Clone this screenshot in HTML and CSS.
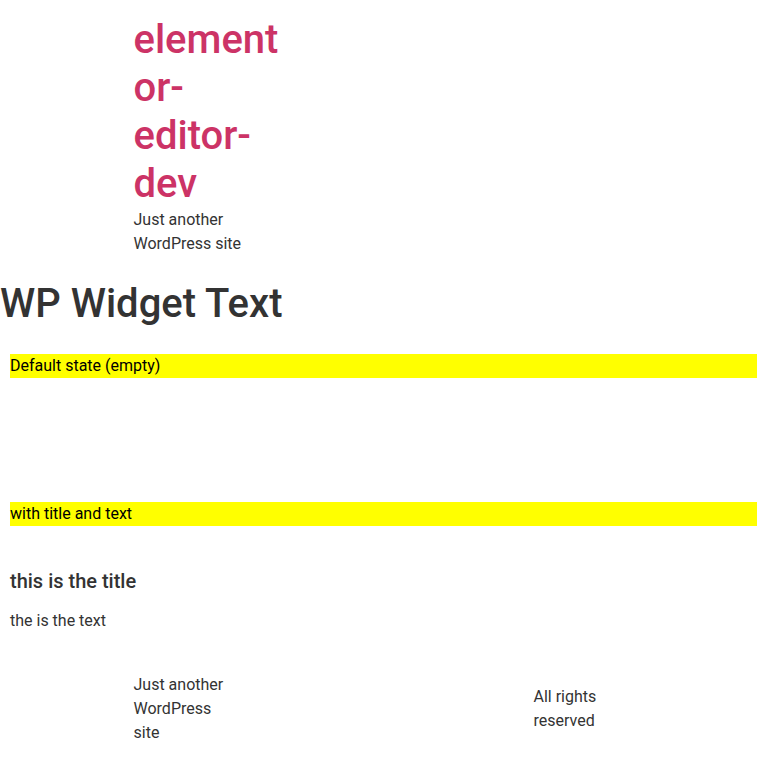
FILE: index.html
```html
<!DOCTYPE html>
<html lang="en">
<head>
<meta charset="utf-8">
<title>WP Widget Text</title>
<link rel="stylesheet" href="styles.css">
</head>
<body>
<header class="site-header">
  <div class="site-branding">
    <h1 class="site-title"><a href="#">elementor-editor-dev</a></h1>
    <p class="site-description">Just another WordPress site</p>
  </div>
</header>
<main class="site-main">
  <header class="page-header">
    <h1 class="entry-title">WP Widget Text</h1>
  </header>
  <div class="page-content">
    <div class="state-label">Default state (empty)</div>
    <div class="widget widget-empty"></div>
    <div class="state-label">with title and text</div>
    <div class="widget widget-text">
      <h5 class="widget-title">this is the title</h5>
      <p class="widget-body">the is the text</p>
    </div>
  </div>
</main>
<footer class="site-footer">
  <div class="footer-inner">
    <p class="footer-description">Just another WordPress site</p>
    <p class="copyright">All rights reserved</p>
  </div>
</footer>
</body>
</html>
```
FILE: styles.css
```css
html, body {
  margin: 0;
  padding: 0;
}
body {
  font-family: Roboto, "Liberation Sans", sans-serif;
  font-size: 16px;
  line-height: 1.5;
  color: #333333;
  background: #ffffff;
}
p { margin: 0; }
h1, h5 { margin: 0; font-weight: 500; }

.site-header {
  max-width: 500px;
  margin: 0 auto;
  padding: 16px 0;
  display: flex;
}
.site-branding {
  width: 150px;
}
.site-title {
  font-size: 40px;
  line-height: 48px;
  overflow-wrap: break-word;
}
.site-title a {
  color: #cc3366;
  text-decoration: none;
}
.site-description {
  font-size: 16px;
  line-height: 24px;
}

.page-header {
  padding-top: 8px;
}
.entry-title {
  font-size: 40px;
  line-height: 48px;
  color: #333333;
}

.page-content {
  padding: 26px 10px 0;
}
.state-label {
  background: #ffff00;
  color: #000000;
  line-height: 24px;
}
.widget-empty {
  height: 124px;
}
.widget-text {
  padding-top: 43px;
}
.widget-title {
  font-size: 20px;
  line-height: 24px;
  margin-bottom: 16px;
}
.widget-body {
  line-height: 24px;
}

.site-footer {
  padding: 40px 0 16px;
}
.footer-inner {
  max-width: 500px;
  margin: 0 auto;
  display: flex;
  justify-content: space-between;
  align-items: center;
}
.footer-description,
.copyright {
  width: 100px;
  line-height: 24px;
}
```
